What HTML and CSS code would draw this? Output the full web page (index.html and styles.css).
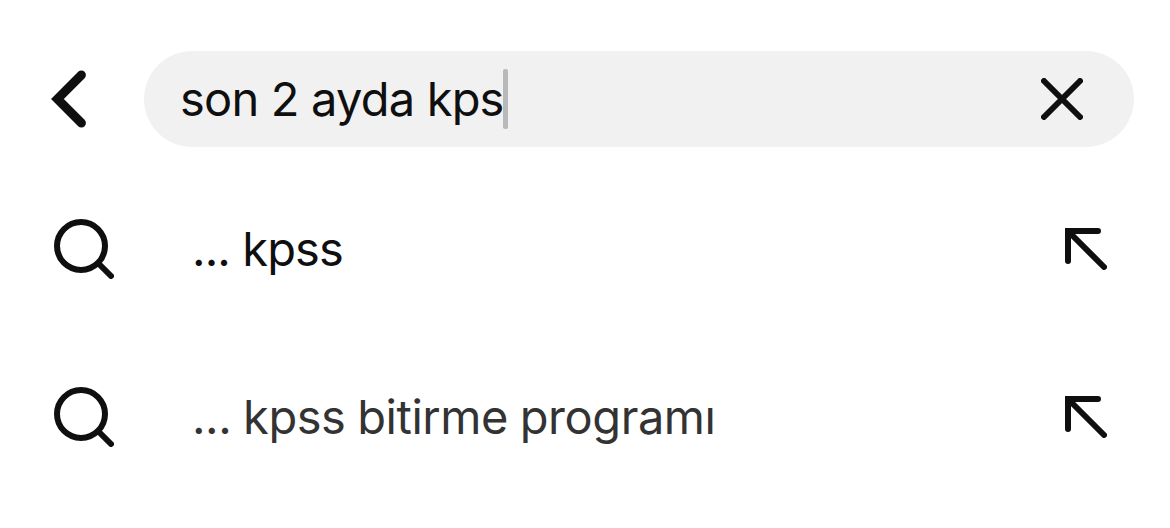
FILE: index.html
```html
<!DOCTYPE html>
<html lang="tr">
<head>
  <meta charset="UTF-8" />
  <meta name="viewport" content="width=device-width, initial-scale=1.0"/>
  <title>Arama</title>
  <link rel="stylesheet" href="styles.css">
</head>
<body>
  <header>
    <svg class="back" viewBox="0 0 36 58">
      <path d="M30.4 5 L6.4 29 L30.4 53" />
    </svg>
    <div class="search-box">
      <span class="query">son 2 ayda kps</span>
      <span class="caret"></span>
      <svg class="clear" viewBox="0 0 42 42">
        <path d="M3 3 L39 39 M39 3 L3 39" />
      </svg>
    </div>
  </header>

  <main>
    <div class="suggestion">
      <svg class="search-icon" viewBox="0 0 60 60">
        <circle cx="27" cy="27" r="24" />
        <path d="M44.5 44.5 L57 57" />
      </svg>
      <span class="suggestion-text">... kpss</span>
      <svg class="fill-arrow" viewBox="0 0 42 42">
        <path d="M33 3 H3 V33 M4 4 L39 39" />
      </svg>
    </div>

    <div class="suggestion secondary">
      <svg class="search-icon" viewBox="0 0 60 60">
        <circle cx="27" cy="27" r="24" />
        <path d="M44.5 44.5 L57 57" />
      </svg>
      <span class="suggestion-text">... kpss bitirme programı</span>
      <svg class="fill-arrow" viewBox="0 0 42 42">
        <path d="M33 3 H3 V33 M4 4 L39 39" />
      </svg>
    </div>
  </main>
</body>
</html>
```

FILE: styles.css
```css
body {
  font-family: Inter, "Liberation Sans", sans-serif;
  font-size: 47px;
  line-height: 60px;
  background: #fff;
  margin: 0;
  color: #0f0f0f;
}
svg {
  flex: none;
  fill: none;
  stroke: #0f0f0f;
  stroke-width: 6;
  stroke-linecap: round;
}
header {
  display: flex;
  align-items: center;
  padding: 51px 36px 18px 51px;
}
.back {
  width: 36px;
  height: 58px;
  margin-right: 57px;
  stroke-width: 9;
}
.search-box {
  display: flex;
  flex: 1;
  align-items: center;
  box-sizing: border-box;
  height: 96px;
  padding: 0 51px 0 36px;
  border-radius: 48px;
  background: #f1f1f1;
}
.query {
  letter-spacing: -0.8px;
  white-space: nowrap;
}
.caret {
  width: 5px;
  height: 60px;
  margin-left: -1px;
  border-radius: 2px;
  background: #b9b9b9;
}
.clear {
  width: 42px;
  height: 42px;
  margin-left: auto;
}
.suggestion {
  display: flex;
  align-items: center;
  height: 168px;
  padding: 0 63px 0 54px;
}
.search-icon {
  width: 60px;
  height: 60px;
  margin-right: 78px;
}
.suggestion-text {
  flex: 1;
  letter-spacing: -0.9px;
  white-space: nowrap;
}
.secondary .suggestion-text {
  color: #333;
  letter-spacing: -0.45px;
  word-spacing: -1px;
}
.fill-arrow {
  width: 42px;
  height: 42px;
}
```
